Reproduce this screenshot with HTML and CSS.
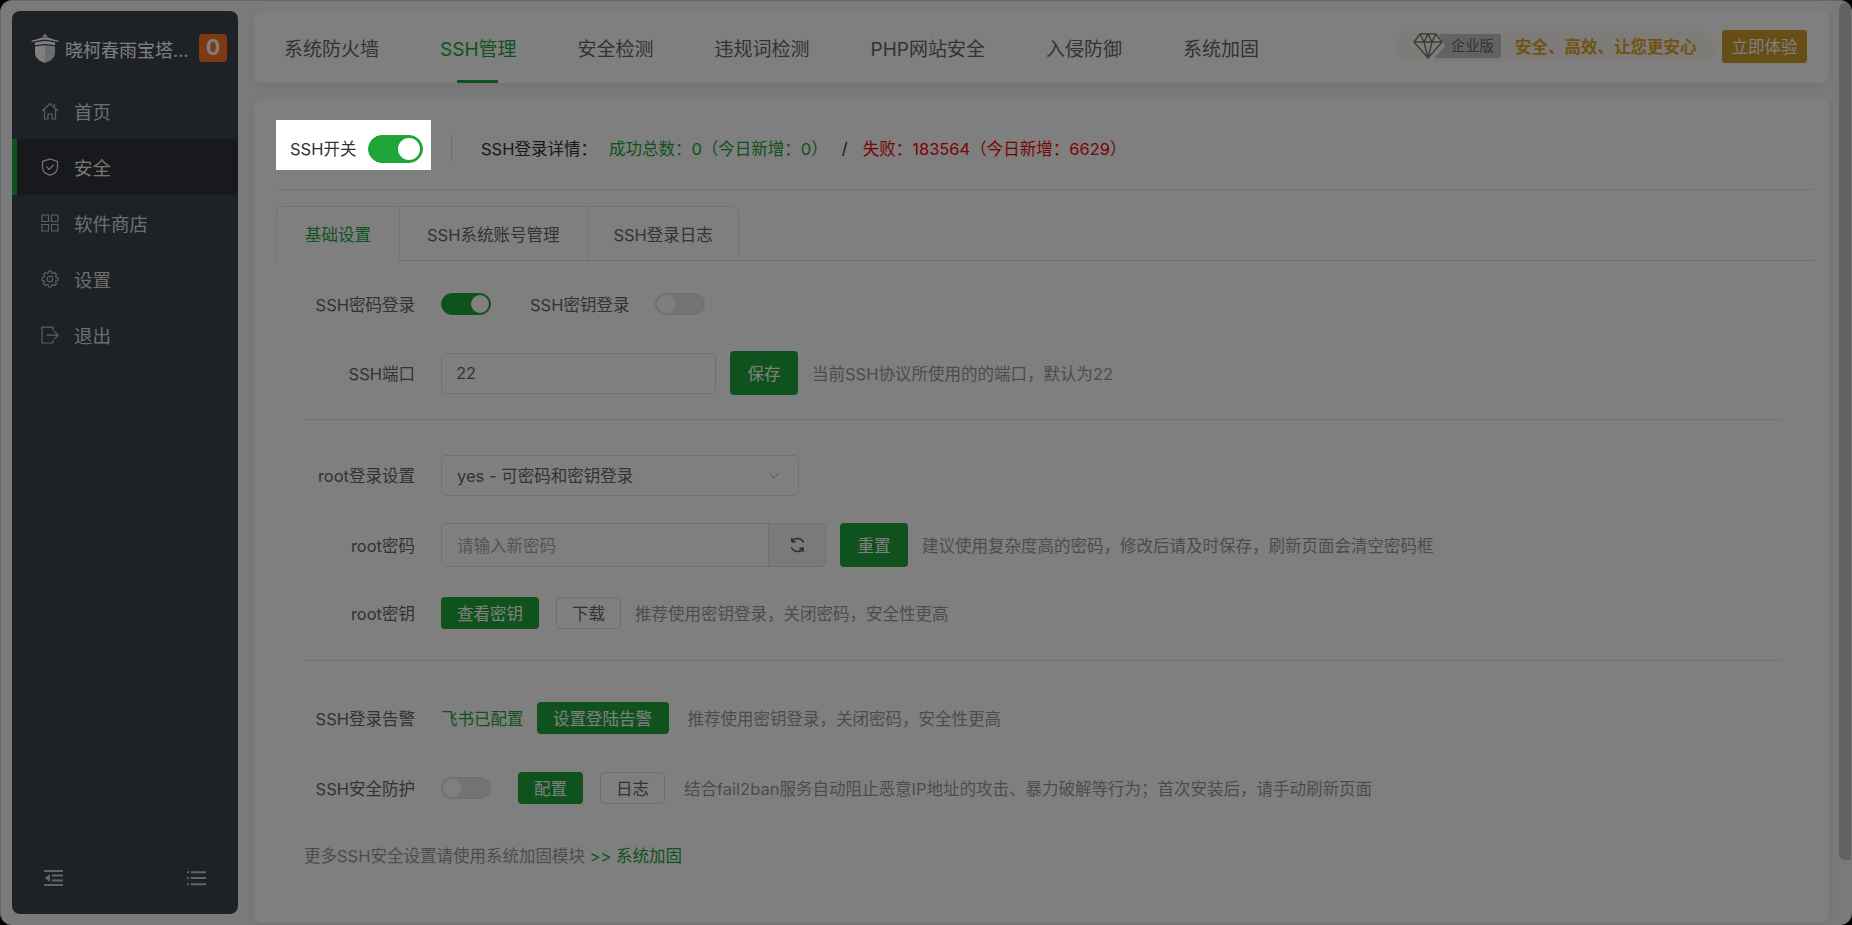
FILE: index.html
```html
<!DOCTYPE html>
<html lang="zh-CN">
<head>
<meta charset="utf-8">
<title>SSH管理</title>
<link rel="stylesheet" href="styles.css">
</head>
<body>
<div class="window">
  <aside class="sidebar">
    <div class="brand">
      <svg class="logo" viewBox="0 0 28 29"><path class="logo-light" d="M14 0l3 2.500h-6zM1 6.500C6 5.500 9 4 14 3c5 1 8 2.500 13 3.500l1 1.500C22 7 18 6 14 5.500 10 6 6 7 0 8zM4 8.500C8 7.700 11 7.300 14 7v3c-3 .2-6 .6-10 1.300zM24 8.500c-4-.8-7-1.200-10-1.500v3c3 .2 6 .6 10 1.300z"/><path class="logo-light" d="M4 12.500c4-.8 7-1.200 10-1.300V29c-5-1.500-10-5-10-10z"/><path class="logo-dim" d="M24 12.500c-4-.8-7-1.200-10-1.300V29c5-1.500 10-5 10-10z"/></svg>
      <span class="brand-name">晓柯春雨宝塔...</span>
      <span class="badge">0</span>
    </div>
    <nav class="nav">
      <a class="nav-item"><svg viewBox="0 0 18 18"><path d="M1 9l8-7.500L17 9M3.500 7.500V17H7v-5h4v5h3.500V7.500M13.500 2v2.500"/></svg><span>首页</span></a>
      <a class="nav-item active"><svg viewBox="0 0 18 18"><path d="M9 1l7.500 2.500V9c0 4-3 7-7.500 8.200C4.500 16 1.500 13 1.500 9V3.500z"/><path d="M5.500 8.700l2.700 2.700 4.500-4.700"/></svg><span>安全</span></a>
      <a class="nav-item"><svg viewBox="0 0 18 18"><path d="M1 1h6.500v6.500H1zM10.500 1H17v6.500h-6.500zM1 10.500h6.500V17H1zM10.500 10.500H17V17h-6.500z"/></svg><span>软件商店</span></a>
      <a class="nav-item"><svg viewBox="0 0 18 18"><path d="M14.900 7.080L16.900 7.750V10.250L14.900 10.920L14.520 11.810L15.470 13.700L13.700 15.470L11.810 14.520L10.920 14.900L10.250 16.900H7.750L7.080 14.900L6.190 14.520L4.300 15.470L2.530 13.700L3.480 11.810L3.100 10.920L1.100 10.250V7.750L3.100 7.080L3.480 6.190L2.530 4.300L4.300 2.530L6.190 3.480L7.080 3.100L7.750 1.100H10.250L10.920 3.100L11.810 3.480L13.700 2.530L15.470 4.300L14.520 6.190z"/><circle cx="9" cy="9" r="2.800"/></svg><span>设置</span></a>
      <a class="nav-item"><svg viewBox="0 0 18 18"><path d="M12 5V1.200H1V17h11v-3.500M5.500 9.200H17M13.500 5.500l3.700 3.700-3.700 3.700"/></svg><span>退出</span></a>
    </nav>
    <div class="side-foot">
      <svg viewBox="0 0 19 18"><path d="M0 1h19v2H0zM0 15h19v2H0zM8 5.500h11v2H8zM8 10.500h11v2H8zM6 5v8L.8 9z"/></svg>
      <svg viewBox="0 0 20 18"><path d="M4 2h16v2H4zM4 8h16v2H4zM4 14.500h16v2H4zM0 2h2v2H0zM0 8h2v2H0zM0 14.500h2v2H0z"/></svg>
    </div>
  </aside>

  <main class="content">
    <header class="card topbar">
      <nav class="top-tabs">
        <a class="top-tab">系统防火墙</a>
        <a class="top-tab current">SSH管理</a>
        <a class="top-tab">安全检测</a>
        <a class="top-tab">违规词检测</a>
        <a class="top-tab">PHP网站安全</a>
        <a class="top-tab">入侵防御</a>
        <a class="top-tab">系统加固</a>
      </nav>
      <div class="promo">
        <div class="promo-pill">
          <svg class="diamond" viewBox="0 0 30 26"><path d="M7 1h16l6 8-14 16L1 9zM1 9h28M7 1l4 8 4 16 4-16 4-8M11 9l4-8 4 8"/></svg>
          <span class="edition">企业版</span>
          <strong class="slogan">安全、高效、让您更安心</strong>
        </div>
        <button class="try-btn">立即体验</button>
      </div>
    </header>

    <section class="card panel">
      <div class="status-row">
        <div class="ssh-switch">
          <span>SSH开关</span>
          <span class="toggle big on"></span>
        </div>
        <span class="v-line"></span>
        <span class="detail-label">SSH登录详情：</span>
        <span class="ok">成功总数：0（今日新增：0）</span>
        <span class="slash">/</span>
        <span class="fail">失败：183564（今日新增：6629）</span>
      </div>

      <div class="tabs">
        <a class="tab selected">基础设置</a>
        <a class="tab">SSH系统账号管理</a>
        <a class="tab">SSH登录日志</a>
      </div>

      <div class="form">
        <div class="row row-first">
          <label class="label">SSH密码登录</label>
          <span class="toggle on"></span>
          <label class="label-inline">SSH密钥登录</label>
          <span class="toggle"></span>
        </div>
        <div class="row">
          <label class="label">SSH端口</label>
          <div class="field port">22</div>
          <button class="btn primary">保存</button>
          <span class="hint">当前SSH协议所使用的的端口，默认为22</span>
        </div>
        <hr class="rule">
        <div class="row row-after-rule">
          <label class="label">root登录设置</label>
          <div class="field select">yes - 可密码和密钥登录
            <svg viewBox="0 0 12 7"><path d="M1 1l5 5 5-5"/></svg>
          </div>
        </div>
        <div class="row row-loose">
          <label class="label">root密码</label>
          <div class="field password">
            <span class="placeholder">请输入新密码</span>
            <span class="addon"><svg viewBox="0 0 18 18"><path d="M15.500 6.500A7 7 0 0 0 3.300 5M2.500 11.500A7 7 0 0 0 14.700 13M3 1.500V5.500H7M15 16.500V12.500H11"/></svg></span>
          </div>
          <button class="btn primary">重置</button>
          <span class="hint">建议使用复杂度高的密码，修改后请及时保存，刷新页面会清空密码框</span>
        </div>
        <div class="row row-tight">
          <label class="label">root密钥</label>
          <button class="btn small primary">查看密钥</button>
          <button class="btn small plain">下载</button>
          <span class="hint">推荐使用密钥登录，关闭密码，安全性更高</span>
        </div>
        <hr class="rule rule-low">
        <div class="row row-alert">
          <label class="label">SSH登录告警</label>
          <span class="configured">飞书已配置</span>
          <button class="btn small primary">设置登陆告警</button>
          <span class="hint hint-far">推荐使用密钥登录，关闭密码，安全性更高</span>
        </div>
        <div class="row row-loose">
          <label class="label">SSH安全防护</label>
          <span class="toggle"></span>
          <button class="btn small primary btn-far">配置</button>
          <button class="btn small plain">日志</button>
          <span class="hint hint-far">结合fail2ban服务自动阻止恶意IP地址的攻击、暴力破解等行为；首次安装后，请手动刷新页面</span>
        </div>
        <p class="more">更多SSH安全设置请使用系统加固模块 <a class="more-link">&gt;&gt; 系统加固</a></p>
      </div>
    </section>
  </main>

  <div class="scrollbar"><div class="thumb"></div></div>
</div>
<div class="dim"></div>
</body>
</html>
```

FILE: styles.css
```css
* { box-sizing: border-box; }
html, body { margin: 0; height: 100%; overflow: hidden; background: #000; }
body { font-family: Inter, "Noto Sans CJK SC", sans-serif; font-size: 16.5px; color: #666; }

.window {
  display: flex;
  height: 925px;
  background: #f4f4f5;
  border-radius: 12px;
  border-top: 1px solid #ccc;
  border-left: 1px solid #ccc;
  overflow: hidden;
}
.dim { position: fixed; inset: 0; background: rgba(0, 0, 0, .5); z-index: 10; }

/* sidebar */
.sidebar {
  flex: none;
  width: 226px;
  margin: 10px 0 11px 11px;
  background: #3c444d;
  border-radius: 8px;
  display: flex;
  flex-direction: column;
}
.brand { display: flex; align-items: center; height: 73px; padding: 2px 0 0 19px; }
.logo { width: 28px; height: 29px; flex: none; }
.logo-light { fill: #fff; }
.logo-dim { fill: #d8d8d8; }
.brand-name { margin-left: 6px; width: 134px; font-size: 18px; color: #fff; white-space: nowrap; }
.badge {
  width: 28px; height: 28px; margin-top: -2px; border-radius: 4px; background: #ff7424;
  color: #fff; font-size: 21px; font-weight: 700; line-height: 28px; text-align: center;
}
.nav { flex: 1; margin-top: -1px; }
.nav-item {
  display: flex; align-items: center; height: 56px; padding-left: 29px;
  font-size: 18.500px; color: #ddd;
}
.nav-item svg { width: 18px; height: 18px; margin-right: 15px; fill: none; stroke: #bbb; stroke-width: 1.200; }
.nav-item.active { background: #2f3238; border-left: 5px solid #20a53a; padding-left: 24px; color: #eee; }
.nav-item.active svg { stroke: #eee; }
.side-foot {
  display: flex; justify-content: space-between; align-items: center;
  height: 74px; padding: 0 32px 0 32px; border-top: 1px solid #40484f;
}
.side-foot svg { width: 19px; height: 18px; fill: #c8c8c8; }

/* content */
.content { flex: none; width: 1575px; margin: 10px 0 0 16px; display: flex; flex-direction: column; gap: 16px; }
.card { background: #fff; border-radius: 8px; box-shadow: 0 2px 8px rgba(0, 0, 0, .06); }
.topbar { display: flex; justify-content: space-between; align-items: center; height: 72px; padding: 0 22px 0 0; }
.top-tabs { display: flex; height: 100%; margin-left: -1px; }
.top-tab { position: relative; display: flex; align-items: center; padding: 0 30.500px; margin-left: .5px; font-size: 19px; color: #666; }
.top-tab:not(:first-child) { margin-left: 0; }
.top-tab.current { color: #20a53a; }
.top-tab.current::after {
  content: ""; position: absolute; bottom: 0; left: 50%; width: 41px; height: 3px;
  margin-left: -21px; background: #20a53a;
}
.promo { display: flex; align-items: center; margin-bottom: 2px; }
.promo-pill {
  display: flex; align-items: center; width: 322px; height: 30px; padding-left: 15px;
  background: #faf8f0; border-radius: 6px 0 0 6px;
  clip-path: polygon(0 0, 96% 0, 100% 50%, 96% 100%, 0 100%);
}
.diamond { width: 30px; height: 26px; flex: none; fill: none; stroke: #777; stroke-width: 1.400; position: relative; z-index: 1; }
.edition {
  width: 67px; height: 24px; margin-left: -9px; padding-left: 17px; border-radius: 2px;
  background: #c4c4c4; color: #666; font-size: 14.300px; line-height: 24px; white-space: nowrap;
  clip-path: polygon(0 100%, 11px 50%, 5px 0, 100% 0, 100% 100%);
}
.slogan { margin-left: 14px; font-size: 16.500px; color: #e3a52b; white-space: nowrap; }
.try-btn {
  width: 85px; height: 33px; margin-left: 2px; padding: 0; border: 0; border-radius: 3px;
  background: #cf9a2c; color: #fff; font: inherit; white-space: nowrap;
}

.panel { flex: 1; min-height: 0; margin-bottom: 2px; padding: 21px 15px 0 22px; }
.status-row {
  display: flex; align-items: center; height: 70px; padding-bottom: 19px;
  border-bottom: 1px solid #e6e6e6;
}
.ssh-switch {
  position: relative; z-index: 20; display: flex; align-items: center; justify-content: space-between;
  width: 155px; height: 50px; padding: 5px 8px 0 14px; background: #fff; color: #333;
}
.status-row > span { margin-top: 5px; }
.toggle {
  position: relative; display: block; flex: none; width: 50px; height: 22px;
  border-radius: 11px; background: #e6e7ec; border: 1px solid #dcdfe6;
}
.toggle::after {
  content: ""; position: absolute; top: 1px; left: 1px; width: 18px; height: 18px;
  border-radius: 50%; background: #fff;
}
.toggle.on { background: #20a53a; border-color: #20a53a; }
.toggle.on::after { left: auto; right: 1px; }
.toggle.big { width: 55px; height: 28px; border-radius: 14px; margin-top: 2px; }
.toggle.big::after { width: 22px; height: 22px; top: 2px; right: 2px; }
.v-line { width: 1px; height: 28px; margin: 0 29px 0 20px; background: #dcdcdc; }
.detail-label { color: #333; }
.ok { margin-left: 12px; color: #20a53a; white-space: nowrap; }
.slash { margin-left: 14px; color: #333; }
.fail { margin-left: 15px; color: #ef0808; white-space: nowrap; }

.tabs { display: flex; height: 55px; margin-top: 16px; border-bottom: 1px solid #dcdfe6; }
.tab {
  display: flex; align-items: center; padding: 0 27.500px; height: 55px;
  border: 1px solid #e4e7ed; border-bottom-color: #dcdfe6; border-left: 0; white-space: nowrap; color: #666;
}
.tab.selected {
  padding: 0 27.500px 0 28px; border-left: 1px solid #e4e7ed; border-radius: 6px 0 0 0;
  border-bottom-color: #fff; color: #20a53a;
}
.tab:last-child { padding: 0 25.500px; border-radius: 0 6px 0 0; }

.form { padding: 0 32px 0 28px; }
.row { display: flex; align-items: center; height: 44px; margin-top: 25px; white-space: nowrap; }
.row-first { margin-top: 21px; }
.row-after-rule { margin-top: 33px; }
.row-loose { margin-top: 26px; }
.row-tight { margin-top: 24px; }
.row-alert { margin-top: 35px; }
.label { flex: none; width: 111px; margin-right: 26px; text-align: right; color: #666; }
.label-inline { margin: 0 26px 0 39px; color: #666; }
.field {
  display: flex; align-items: center; height: 41px; border: 1px solid #dcdfe6; border-radius: 5px; background: #fff; color: #666;
}
.port { width: 275px; padding-left: 14px; }
.select { position: relative; justify-content: space-between; width: 358px; padding: 0 18px 0 15px; }
.select svg { width: 12px; height: 7px; fill: none; stroke: #aaa; stroke-width: 1; }
.password { width: 385px; height: 44px; padding-left: 15px; justify-content: space-between; overflow: hidden; }
.placeholder { color: #aaa; }
.addon {
  display: flex; align-items: center; justify-content: center; width: 57px; height: 100%;
  border-left: 1px solid #dcdfe6; background: #f4f5f8;
}
.addon svg { width: 17px; height: 18px; fill: none; stroke: #555; stroke-width: 1.500; }
.btn {
  flex: none; height: 44px; padding: 0; border: 1px solid transparent; border-radius: 4px;
  font: inherit; white-space: nowrap;
}
.primary { background: #20a53a; color: #fff; width: 68px; margin-left: 14px; }
.hint { margin-left: 14px; color: #999; }
.field + .primary { margin-left: 14px; }
.small { height: 32px; }
.label + .small.primary { width: 98px; margin-left: 0; }
.plain { width: 65px; margin-left: 17px; background: #fff; border-color: #dcdfe6; color: #666; }
.configured { color: #20a53a; }
.configured + .small.primary { width: 132px; margin-left: 13px; }
.hint-far { margin-left: 19px; }
.btn-far { width: 65px; margin-left: 27px; }
.rule { height: 1px; margin: 24px 0 0; border: 0; background: #e6e6e6; }
.rule-low { margin-top: 25px; }
.more { margin: 35px 0 0; color: #999; line-height: 22px; white-space: nowrap; }
.more-link { color: #20a53a; }

.scrollbar { flex: none; width: 12px; margin-left: 10px; padding-top: 2px; }
.thumb { height: 857px; border-radius: 6px 0 0 6px; background: #c4c4c4; }
```
